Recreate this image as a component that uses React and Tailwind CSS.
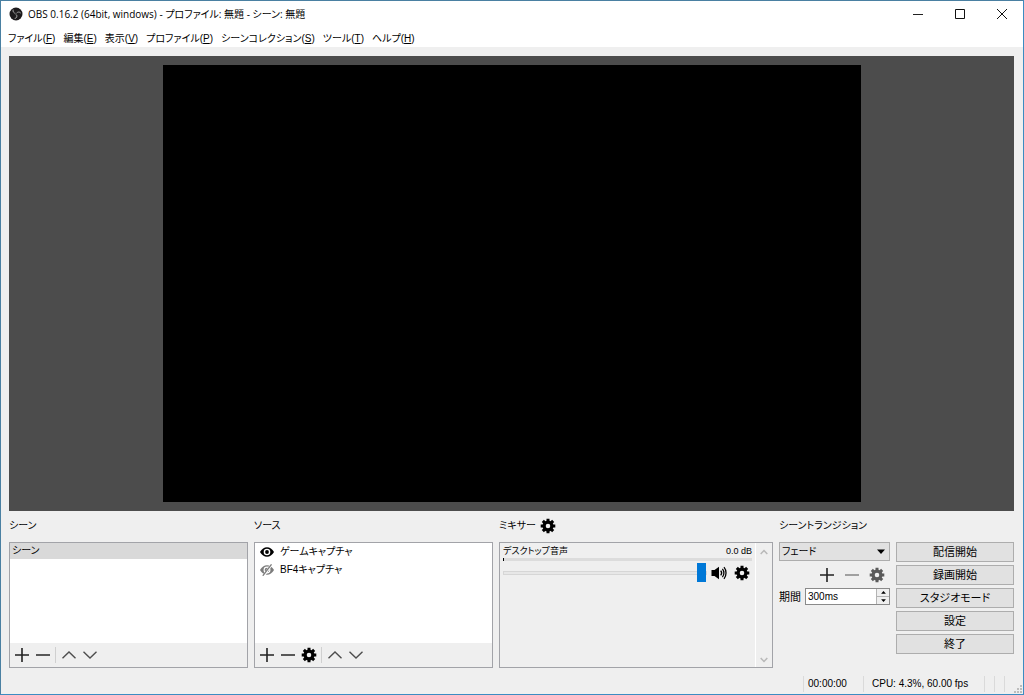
import React, { useState } from 'react';

const menus = [
  { label: 'ファイル', mnemonic: 'F' },
  { label: '編集', mnemonic: 'E' },
  { label: '表示', mnemonic: 'V' },
  { label: 'プロファイル', mnemonic: 'P' },
  { label: 'シーンコレクション', mnemonic: 'S' },
  { label: 'ツール', mnemonic: 'T' },
  { label: 'ヘルプ', mnemonic: 'H' },
];

const controls = ['配信開始', '録画開始', 'スタジオモード', '設定', '終了'];

const LogoIcon = () => (
  <svg viewBox="0 0 14 14" className="h-[14px] w-[14px]">
    <circle cx="7" cy="7" r="6.500" fill="#1c1a1c" />
    <g fill="none" stroke="#a3a3a3" strokeWidth="1">
      <path d="M4.200 2.600c-.6 2 .4 3.400 2.300 3.800" />
      <path d="M11.800 6.200C10.600 4.600 8.800 4.700 7.500 6.200" />
      <path d="M5.700 11.500c2-.3 2.700-2 1.900-3.700" />
    </g>
    <circle cx="7" cy="7" r="1.200" fill="#4a4a4a" />
  </svg>
);

const GearIcon = ({ color = '#000' }) => (
  <svg viewBox="0 0 16 16" className="h-4 w-4" fill="none" stroke={color}>
    <circle cx="8" cy="8" r="3.900" strokeWidth="3.200" />
    {[0, 45, 90, 135].map((angle) => (
      <path key={angle} d="M8 .7v3M8 12.300v3" strokeWidth="3" transform={`rotate(${angle} 8 8)`} />
    ))}
  </svg>
);

const PlusIcon = () => (
  <svg viewBox="0 0 16 16" className="h-4 w-4" stroke="#222" strokeWidth="1.600">
    <path d="M1 8h14M8 1v14" />
  </svg>
);

const MinusIcon = ({ color = '#333' }) => (
  <svg viewBox="0 0 16 16" className="h-4 w-4" stroke={color} strokeWidth="1.600">
    <path d="M1 8h14" />
  </svg>
);

const ChevronIcon = ({ down }) => (
  <svg viewBox="0 0 16 16" className="h-4 w-4" fill="none" stroke="#4d4d4d" strokeWidth="1.400">
    <path d={down ? 'M1.500 4.800L8 11l6.500-6.200' : 'M1.500 11.200L8 5l6.500 6.200'} />
  </svg>
);

const EyeIcon = () => (
  <svg viewBox="0 0 14 10" className="h-[10px] w-[14px]">
    <path d="M0 5C3.300-1.300 10.700-1.300 14 5 10.700 11.300 3.300 11.300 0 5z" fill="#000" />
    <circle cx="7" cy="5" r="3.300" fill="#fff" />
    <circle cx="7" cy="5" r="1.900" fill="#000" />
  </svg>
);

const EyeOffIcon = () => (
  <svg viewBox="0 0 14 12" className="h-3 w-[14px]">
    <path d="M0 6C3.300-.3 10.700-.3 14 6 10.700 12.300 3.300 12.300 0 6z" fill="#7c7c7c" />
    <circle cx="7" cy="6" r="2.900" fill="none" stroke="#fff" strokeWidth="1.100" />
    <path d="M3.500 12L11.500 .5" stroke="#fff" strokeWidth="2.400" />
    <path d="M2.800 11.800L11.500.3" stroke="#7c7c7c" strokeWidth="1.300" />
  </svg>
);

const SpeakerIcon = () => (
  <svg viewBox="0 0 16 14" className="h-[14px] w-4">
    <path d="M.5 4h3L8 .8v12.400L3.500 10h-3z" fill="#000" />
    <g fill="none" stroke="#000" strokeWidth="1.300">
      <path d="M9.700 4.700c1.100 1.300 1.100 3.300 0 4.600" />
      <path d="M11.400 2.900c2 2.300 2 5.900 0 8.200" />
      <path d="M13 1.200c2.700 3.300 2.700 8.300 0 11.600" />
    </g>
  </svg>
);

const SmallArrow = ({ down, big }) => (
  <svg viewBox="0 0 8 5" className={big ? 'h-[5px] w-2' : 'h-[3px] w-[5px]'} fill="#000">
    <path d={down ? 'M0 .5h8L4 5z' : 'M0 4.500h8L4 0z'} />
  </svg>
);

const ToolButton = ({ label, children }) => (
  <button type="button" aria-label={label} className="flex h-[21px] w-[21px] items-center justify-center">
    {children}
  </button>
);

const Toolbar = ({ withSettings }) => (
  <div className="flex h-[24px] items-center bg-[#efefef] pl-px">
    <ToolButton label="追加"><PlusIcon /></ToolButton>
    <ToolButton label="削除"><MinusIcon /></ToolButton>
    {withSettings && <ToolButton label="設定"><GearIcon /></ToolButton>}
    <span className="mx-[2px] h-4 w-px bg-[#d0d0d0]" />
    <ToolButton label="上へ"><ChevronIcon /></ToolButton>
    <ToolButton label="下へ"><ChevronIcon down /></ToolButton>
  </div>
);

const Panel = ({ title, action, children }) => (
  <section className="flex min-w-0 flex-col">
    <div className="flex h-[31px] items-center gap-1 pb-[2px]">
      <h2 className="text-[10px] whitespace-nowrap">{title}</h2>
      {action}
    </div>
    {children}
  </section>
);

const boxClass = 'flex h-[126px] flex-col border border-[#a2a3a8]';

export default function App() {
  const [volume, setVolume] = useState(100);
  const [duration, setDuration] = useState('300ms');

  return (
    <div className="flex h-screen min-h-[400px] flex-col border border-t-[#4a80a2] border-r-[#3b8cc2] border-b-[#3b8cc2] border-l-[#4a80a2] bg-[#efefef] font-['Liberation_Sans','Noto_Sans_CJK_JP',sans-serif] text-[11px] leading-4 text-black [font-feature-settings:'palt']">
      <header className="flex h-[26px] items-center bg-white pl-2">
        <LogoIcon />
        <h1 className="ml-[5px] flex-1 font-['Open_Sans','Noto_Sans_CJK_JP',sans-serif] text-[10px] whitespace-nowrap">
          OBS 0.16.2 (64bit, windows) - プロファイル: 無題 - シーン: 無題
        </h1>
        <div className="flex">
          <button type="button" aria-label="最小化" className="flex h-[26px] w-[42px] items-center justify-center">
            <svg viewBox="0 0 10 10" className="h-[10px] w-[10px]" stroke="#222"><path d="M0 5.500h10" /></svg>
          </button>
          <button type="button" aria-label="最大化" className="flex h-[26px] w-[42px] items-center justify-center">
            <svg viewBox="0 0 10 10" className="h-[10px] w-[10px]" fill="none" stroke="#111"><path d="M.5.5h9v9h-9z" /></svg>
          </button>
          <button type="button" aria-label="閉じる" className="flex h-[26px] w-[42px] items-center justify-center">
            <svg viewBox="0 0 10 10" className="h-[10px] w-[10px]" stroke="#111"><path d="M0 0l10 10M10 0L0 10" /></svg>
          </button>
        </div>
      </header>

      <nav className="flex h-5 items-center gap-2 bg-white pt-[3px] pl-[7px] text-[10px]">
        {menus.map((menu) => (
          <button key={menu.mnemonic} type="button" className="whitespace-nowrap">
            {menu.label}(<u>{menu.mnemonic}</u>)
          </button>
        ))}
      </nav>

      <main className="flex min-h-0 flex-1 flex-col pt-[9px] pr-[9px] pl-2">
        <div className="flex min-h-0 flex-1 justify-center bg-[#4c4c4c] p-[9px]">
          <div className="aspect-[698/437] h-full bg-black" />
        </div>

        <div className="grid grid-cols-[239fr_239fr_274fr_111px_118px] gap-x-[6px]">
          <Panel title="シーン">
            <div className={boxClass}>
              <ul className="flex-1 bg-white">
                <li className="h-4 bg-[#d9d9d9] pl-[2px] text-[10px]">シーン</li>
              </ul>
              <Toolbar />
            </div>
          </Panel>

          <Panel title="ソース">
            <div className={boxClass}>
              <ul className="flex-1 bg-white pl-[5px] text-[10px]">
                <li className="flex h-[18px] items-center gap-[6px]">
                  <EyeIcon />
                  ゲームキャプチャ
                </li>
                <li className="flex h-[18px] items-center gap-[6px]">
                  <EyeOffIcon />
                  BF4キャプチャ
                </li>
              </ul>
              <Toolbar withSettings />
            </div>
          </Panel>

          <Panel
            title="ミキサー"
            action={<button type="button" aria-label="ミキサー設定"><GearIcon /></button>}
          >
            <div className="flex h-[126px] border border-[#a2a3a8]">
              <div className="flex min-w-0 flex-1 flex-col px-[3px]">
                <div className="flex h-[15px] items-center justify-between text-[9px]">
                  <label htmlFor="volume">デスクトップ音声</label>
                  <span>0.0 dB</span>
                </div>
                <div className="h-[3px] border-l border-black bg-[#dcdcdc]" />
                <div className="mt-[2px] flex items-center">
                  <input
                    id="volume"
                    type="range"
                    value={volume}
                    onChange={(e) => setVolume(e.target.value)}
                    className="h-5 min-w-0 flex-1 appearance-none bg-transparent [&::-webkit-slider-runnable-track]:h-1 [&::-webkit-slider-runnable-track]:border [&::-webkit-slider-runnable-track]:border-[#d6d6d6] [&::-webkit-slider-runnable-track]:bg-[#e7e7e7] [&::-webkit-slider-thumb]:-mt-[9px] [&::-webkit-slider-thumb]:h-[19px] [&::-webkit-slider-thumb]:w-[9px] [&::-webkit-slider-thumb]:appearance-none [&::-webkit-slider-thumb]:bg-[#0078d7]"
                  />
                  <button type="button" aria-label="ミュート" className="ml-1"><SpeakerIcon /></button>
                  <button type="button" aria-label="音声設定" className="mr-[2px] ml-[7px]"><GearIcon /></button>
                </div>
              </div>
              <div className="flex w-[17px] flex-col items-center justify-between border-l border-white py-1">
                <svg viewBox="0 0 8 6" className="mt-[2px] h-[6px] w-2" fill="none" stroke="#b8b8b8" strokeWidth="1.500"><path d="M.7 5L4 1.500 7.300 5" /></svg>
                <svg viewBox="0 0 8 6" className="h-[6px] w-2" fill="none" stroke="#b8b8b8" strokeWidth="1.500"><path d="M.7 1L4 4.500 7.300 1" /></svg>
              </div>
            </div>
          </Panel>

          <Panel title="シーントランジション">
            <div className="grid grid-cols-1 items-center">
              <select
                aria-label="シーントランジション"
                className="col-start-1 row-start-1 h-[19px] w-full appearance-none border border-[#adadad] bg-[#e1e1e1] pl-[2px] text-[10px]"
              >
                <option>フェード</option>
              </select>
              <span className="pointer-events-none col-start-1 row-start-1 mr-[5px] justify-self-end">
                <SmallArrow down big />
              </span>
            </div>
            <div className="flex h-[27px] items-center justify-end gap-1 pr-[3px]">
              <ToolButton label="追加"><PlusIcon /></ToolButton>
              <ToolButton label="削除"><MinusIcon color="#8c8c8c" /></ToolButton>
              <ToolButton label="設定"><GearIcon color="#5a5a5a" /></ToolButton>
            </div>
            <div className="flex items-center gap-1">
              <label htmlFor="duration" className="whitespace-nowrap">期間</label>
              <div className="flex h-[17px] min-w-0 flex-1 border border-[#8a8a8a] bg-white">
                <input
                  id="duration"
                  type="text"
                  value={duration}
                  onChange={(e) => setDuration(e.target.value)}
                  className="min-w-0 flex-1 pl-[2px] text-[10px]"
                />
                <div className="flex w-[13px] flex-col border-l border-[#b4b4b4] bg-[#efefef]">
                  <button type="button" aria-label="増やす" className="flex flex-1 items-center justify-center border-b border-[#b4b4b4]"><SmallArrow /></button>
                  <button type="button" aria-label="減らす" className="flex flex-1 items-center justify-center"><SmallArrow down /></button>
                </div>
              </div>
            </div>
          </Panel>

          <div className="flex flex-col gap-[3px] pt-[31px]">
            {controls.map((label) => (
              <button key={label} type="button" className="h-5 border border-[#adadad] bg-[#e1e1e1]">
                {label}
              </button>
            ))}
          </div>
        </div>
      </main>

      <footer className="mt-[6px] flex h-5 items-center justify-end text-[10px]">
        <span className="w-[60px] border-l border-[#dadada] pl-1">00:00:00</span>
        <span className="w-[121px] border-l border-[#dadada] pl-2 whitespace-nowrap">CPU: 4.3%, 60.00 fps</span>
        <span className="h-4 w-[10px] border-l border-[#dadada]" />
        <span className="h-4 w-[10px] border-l border-[#dadada]" />
        <span className="h-4 w-[10px] border-l border-[#dadada]" />
        <svg viewBox="0 0 9 9" className="h-[9px] w-[9px] self-end" fill="#bdbdbd">
          <path d="M6 0h2v2h-2zM3 3h2v2h-2zM6 3h2v2h-2zM0 6h2v2h-2zM3 6h2v2h-2zM6 6h2v2h-2z" />
        </svg>
      </footer>
    </div>
  );
}
